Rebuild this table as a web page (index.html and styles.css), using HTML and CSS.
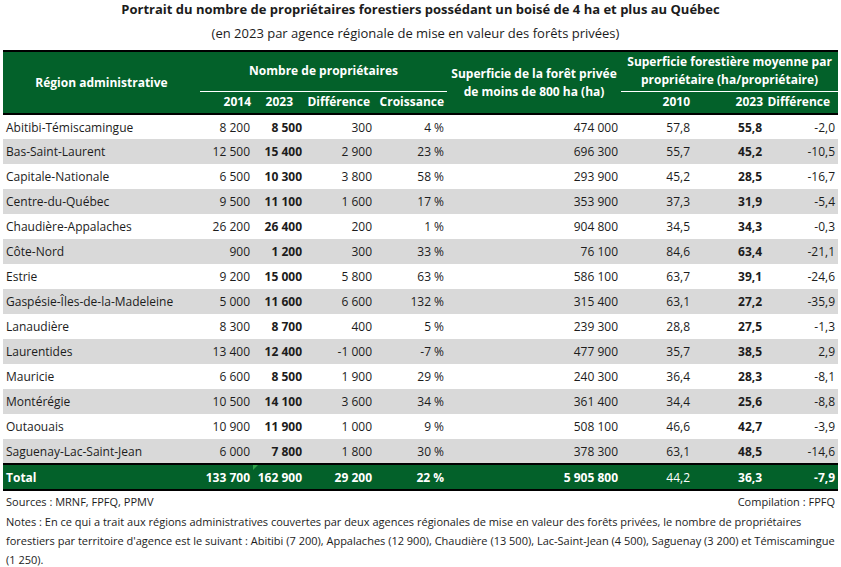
FILE: index.html
```html
<!DOCTYPE html>
<html lang="fr">
<head>
<meta charset="utf-8">
<title>Portrait des propriétaires forestiers</title>
<link rel="stylesheet" href="styles.css">
</head>
<body>
<div class="page">
  <h1 class="title">Portrait du nombre de propriétaires forestiers possédant un boisé de 4 ha et plus au Québec</h1>
  <p class="subtitle">(en 2023 par agence régionale de mise en valeur des forêts privées)</p>
  <table class="data">
    <colgroup>
      <col class="c-region"><col class="c-2014"><col class="c-2023"><col class="c-diff"><col class="c-croiss"><col class="c-sup"><col class="c-2010"><col class="c-2023b"><col class="c-diffb">
    </colgroup>
    <thead>
      <tr class="h1">
        <th rowspan="2" class="h-region">Région administrative</th>
        <th colspan="4" class="h-group">Nombre de propriétaires</th>
        <th rowspan="2" class="h-sup">Superficie de la forêt privée<br>de moins de 800 ha (ha)</th>
        <th colspan="3" class="h-group h-moy">Superficie forestière moyenne par<br>propriétaire (ha/propriétaire)</th>
      </tr>
      <tr class="h2">
        <th class="num p2">2014</th>
        <th class="num p12">2023</th>
        <th class="num p5">Différence</th>
        <th class="num p3">Croissance</th>
        <th class="num p3">2010</th>
        <th class="num p2">2023</th>
        <th class="num p8">Différence</th>
      </tr>
    </thead>
    <tbody>
      <tr><td>Abitibi-Témiscamingue</td><td>8 200</td><td class="b">8 500</td><td>300</td><td>4 %</td><td>474 000</td><td>57,8</td><td class="b">55,8</td><td>-2,0</td></tr>
      <tr><td>Bas-Saint-Laurent</td><td>12 500</td><td class="b">15 400</td><td>2 900</td><td>23 %</td><td>696 300</td><td>55,7</td><td class="b">45,2</td><td>-10,5</td></tr>
      <tr><td>Capitale-Nationale</td><td>6 500</td><td class="b">10 300</td><td>3 800</td><td>58 %</td><td>293 900</td><td>45,2</td><td class="b">28,5</td><td>-16,7</td></tr>
      <tr><td>Centre-du-Québec</td><td>9 500</td><td class="b">11 100</td><td>1 600</td><td>17 %</td><td>353 900</td><td>37,3</td><td class="b">31,9</td><td>-5,4</td></tr>
      <tr><td>Chaudière-Appalaches</td><td>26 200</td><td class="b">26 400</td><td>200</td><td>1 %</td><td>904 800</td><td>34,5</td><td class="b">34,3</td><td>-0,3</td></tr>
      <tr><td>Côte-Nord</td><td>900</td><td class="b">1 200</td><td>300</td><td>33 %</td><td>76 100</td><td>84,6</td><td class="b">63,4</td><td>-21,1</td></tr>
      <tr><td>Estrie</td><td>9 200</td><td class="b">15 000</td><td>5 800</td><td>63 %</td><td>586 100</td><td>63,7</td><td class="b">39,1</td><td>-24,6</td></tr>
      <tr><td>Gaspésie-Îles-de-la-Madeleine</td><td>5 000</td><td class="b">11 600</td><td>6 600</td><td>132 %</td><td>315 400</td><td>63,1</td><td class="b">27,2</td><td>-35,9</td></tr>
      <tr><td>Lanaudière</td><td>8 300</td><td class="b">8 700</td><td>400</td><td>5 %</td><td>239 300</td><td>28,8</td><td class="b">27,5</td><td>-1,3</td></tr>
      <tr><td>Laurentides</td><td>13 400</td><td class="b">12 400</td><td>-1 000</td><td>-7 %</td><td>477 900</td><td>35,7</td><td class="b">38,5</td><td>2,9</td></tr>
      <tr><td>Mauricie</td><td>6 600</td><td class="b">8 500</td><td>1 900</td><td>29 %</td><td>240 300</td><td>36,4</td><td class="b">28,3</td><td>-8,1</td></tr>
      <tr><td>Montérégie</td><td>10 500</td><td class="b">14 100</td><td>3 600</td><td>34 %</td><td>361 400</td><td>34,4</td><td class="b">25,6</td><td>-8,8</td></tr>
      <tr><td>Outaouais</td><td>10 900</td><td class="b">11 900</td><td>1 000</td><td>9 %</td><td>508 100</td><td>46,6</td><td class="b">42,7</td><td>-3,9</td></tr>
      <tr><td>Saguenay-Lac-Saint-Jean</td><td>6 000</td><td class="b">7 800</td><td>1 800</td><td>30 %</td><td>378 300</td><td>63,1</td><td class="b">48,5</td><td>-14,6</td></tr>
    </tbody>
    <tfoot>
      <tr><td class="b">Total</td><td class="b">133 700</td><td class="b flag">162 900</td><td class="b">29 200</td><td class="b">22 %</td><td class="b">5 905 800</td><td>44,2</td><td class="b">36,3</td><td class="b">-7,9</td></tr>
    </tfoot>
  </table>
  <div class="credits">
    <span>Sources : MRNF, FPFQ, PPMV</span>
    <span>Compilation : FPFQ</span>
  </div>
  <p class="notes">Notes : En ce qui a trait aux régions administratives couvertes par deux agences régionales de mise en valeur des forêts privées, le nombre de propriétaires forestiers par territoire d'agence est le suivant : Abitibi (7 200), Appalaches (12 900), Chaudière (13 500), Lac-Saint-Jean (4 500), Saguenay (3 200) et Témiscamingue (1 250).</p>
</div>
</body>
</html>
```

FILE: styles.css
```css
* { box-sizing: border-box; }
html, body { margin: 0; padding: 0; background: #fff; }
body {
  font-family: "Open Sans", "DejaVu Sans", sans-serif;
  font-size: 12px;
  color: #1c1c1c;
}
.page { padding: 0 3px; width: 841px; }
.title {
  margin: 0;
  height: 21px;
  font-size: 13px;
  font-weight: 700;
  text-align: center;
  line-height: 18px;
}
.subtitle {
  margin: 0;
  height: 29px;
  line-height: 24px;
  text-align: center;
  padding-right: 10px;
  font-size: 13px;
}
.data {
  width: 835px;
  table-layout: fixed;
  border-collapse: collapse;
  border-top: 2px solid #000;
}
.c-region { width: 197px; }
.c-2014 { width: 53px; }
.c-2023 { width: 52px; }
.c-diff { width: 70px; }
.c-croiss { width: 72px; }
.c-sup { width: 174px; }
.c-2010 { width: 72px; }
.c-2023b { width: 72px; }
.c-diffb { width: 73px; }

thead th {
  background: #03612a;
  color: #fff;
  font-weight: 700;
  padding: 0;
  line-height: 18px;
  white-space: nowrap;
}
thead .h1 { height: 40px; }
thead .h2 { height: 23px; }
thead .h2 th { border-bottom: 2px solid #000; vertical-align: middle; }
.h-region { border-bottom: 2px solid #000; text-align: center; }
.h-sup { border-bottom: 2px solid #000; text-align: center; padding-top: 1px; }
.h-group { border-bottom: 1px solid #fff; text-align: center; vertical-align: middle; }
.h-moy { vertical-align: top; padding-top: 1px; }
.num { text-align: right; }
.p2 { padding-right: 2px !important; }
.p3 { padding-right: 3px !important; }
.p5 { padding-right: 5px !important; }
.p8 { padding-right: 8px !important; }
.p12 { padding-right: 12px !important; }

tbody tr { height: 25px; }
tbody tr:nth-child(even) td { background: #d9d9d9; }
td {
  padding: 0 3px;
  text-align: right;
  white-space: nowrap;
  vertical-align: middle;
}
td:first-child { text-align: left; }
.b { font-weight: 700; }

tfoot tr { height: 26px; }
tfoot td {
  background: #03612a;
  color: #fff;
  border-top: 2px solid #000;
  border-bottom: 2px solid #000;
}
.flag { position: relative; }
.flag::before {
  content: "";
  position: absolute;
  left: 0;
  top: 0;
  border-top: 5px solid #2fa24a;
  border-right: 5px solid transparent;
}

.credits {
  display: flex;
  justify-content: space-between;
  width: 835px;
  padding: 0 3px;
  height: 20px;
  line-height: 20px;
  margin-top: 1px;
  font-size: 11px;
}
.notes {
  margin: 0;
  padding: 0 3px;
  width: 835px;
  line-height: 19px;
  font-size: 11px;
}
```
